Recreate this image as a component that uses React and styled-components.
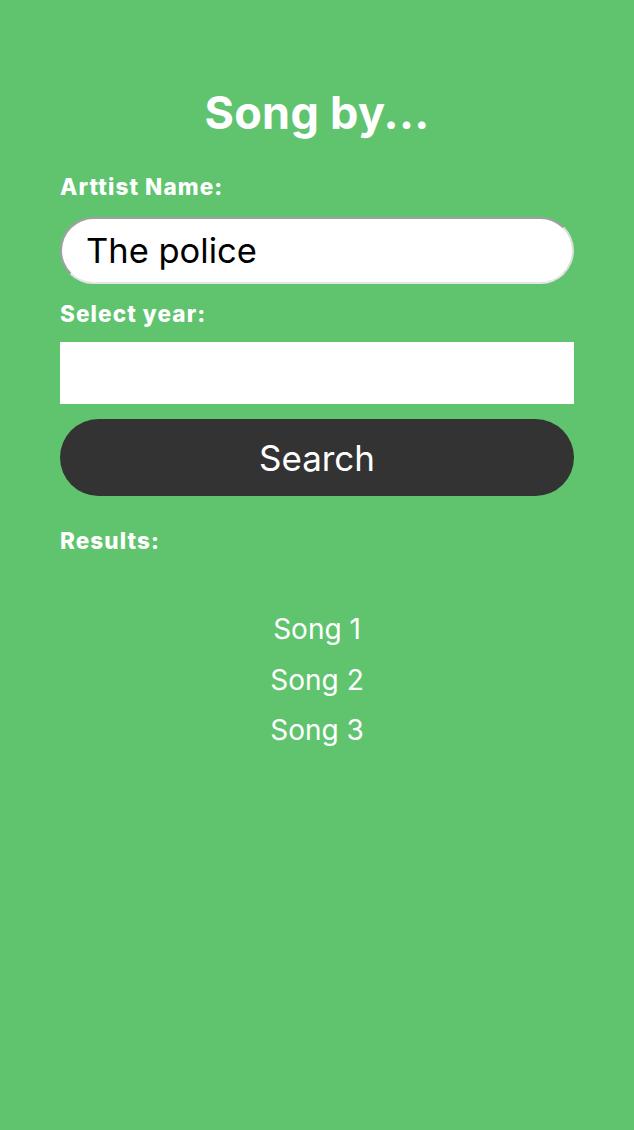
import styled, { createGlobalStyle } from "styled-components";

const GlobalStyle = createGlobalStyle`
  html, body {
    margin: 0;
    padding: 0;
    background: #60c46f;
  }
  * { box-sizing: border-box; }
`;

const Page = styled.main`
  min-height: 1130px;
  background: #60c46f;
  padding: 82px 60px 0;
  font-family: Inter, "Noto Sans", sans-serif;
  color: #fff;
  display: flex;
  flex-direction: column;
`;

const Title = styled.h1`
  margin: 0 0 30px;
  text-align: center;
  font-size: 45px;
  font-weight: 700;
  line-height: 62px;
  letter-spacing: 0.3px;
`;

const Label = styled.label`
  display: block;
  font-size: 22.5px;
  font-weight: 800;
  letter-spacing: 1.1px;
  line-height: 25px;
  margin-bottom: ${(p) => p.$gap || 18}px;
`;

const TextInput = styled.input`
  display: block;
  width: 100%;
  height: 67px;
  border-radius: 34px;
  border: 2px solid;
  border-color: #a0a0a0 #dedede #e6e6e6 #a0a0a0;
  background: #fff;
  padding: 0 24px;
  font-family: Inter, "Noto Sans", sans-serif;
  font-size: 34.5px;
  color: #000;
  outline: none;
  margin-bottom: 17px;
`;

const YearInput = styled.input`
  display: block;
  width: 100%;
  height: 62px;
  border: none;
  background: #fff;
  margin-bottom: 15px;
  outline: none;
`;

const SearchButton = styled.button`
  display: block;
  width: 100%;
  height: 77px;
  border: none;
  border-radius: 39px;
  background: #333333;
  color: #fff;
  font-family: Inter, "Noto Sans", sans-serif;
  font-size: 35px;
  font-weight: 400;
  margin-bottom: 32px;
  cursor: pointer;
`;

const Results = styled.ul`
  list-style: none;
  margin: 33px 0 0;
  padding: 0;
  text-align: center;
`;

const Song = styled.li`
  font-size: 28px;
  line-height: 50.5px;
`;

export default function App() {
  const songs = ["Song 1", "Song 2", "Song 3"];
  return (
    <>
      <GlobalStyle />
      <Page>
        <Title>Song by...</Title>
        <Label htmlFor="artist">Arttist Name:</Label>
        <TextInput id="artist" defaultValue="The police" />
        <Label htmlFor="year" $gap={16}>Select year:</Label>
        <YearInput id="year" />
        <SearchButton>Search</SearchButton>
        <Label as="div">Results:</Label>
        <Results>
          {songs.map((s) => (
            <Song key={s}>{s}</Song>
          ))}
        </Results>
      </Page>
    </>
  );
}
